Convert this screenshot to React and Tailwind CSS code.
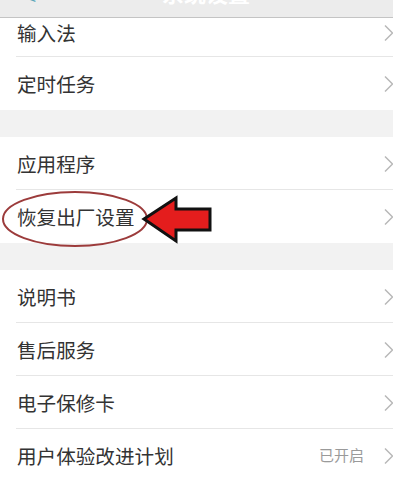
import React from 'react';

function Chevron() {
  return (
    <svg width="10" height="18" viewBox="0 0 10 18" className="shrink-0 -mr-[4px]">
      <path d="M1 1.5 L8.5 9 L1 16.5" fill="none" stroke="#b8b8b8" strokeWidth="1.5" />
    </svg>
  );
}

function Row({ label, value, first, last, h = 'h-[53px]' }) {
  return (
    <div className={`relative flex items-center pl-[17px] pr-[3px] ${h} bg-white`}>
      <span className={`flex-1 text-[19.6px] text-[#333] ${first ? 'pb-[9px]' : ''}`}>{label}</span>
      {value && <span className="mr-[20px] text-[15px] text-[#9a9a9a]">{value}</span>}
      <span className={first ? 'pb-[9px]' : ''}><Chevron /></span>
      {!last && <div className="absolute bottom-0 left-[16px] right-0 h-px bg-[#e6e6e6]" />}
    </div>
  );
}

export default function App() {
  return (
    <div className="relative w-[393px] h-[480px] overflow-hidden bg-[#f2f2f2]" style={{ fontFamily: '"Noto Sans CJK SC", "Noto Sans", sans-serif' }}>
      <div className="relative h-[18px] bg-[#ececec] border-b border-[#c4c4c4] overflow-hidden">
        <span className="absolute left-[26px] -top-[16px] text-[18px] text-[#5aa6b8]">&lt;</span>
        <span className="absolute left-[162px] -top-[24px] text-[22px] font-bold text-white">系统设置</span>
      </div>

      <Row label="输入法" first h="h-[39px]" />
      <Row label="定时任务" last h="h-[53px]" />
      <div className="h-[27px]" />
      <Row label="应用程序" />
      <Row label="恢复出厂设置" last />
      <div className="h-[27px]" />
      <Row label="说明书" />
      <Row label="售后服务" />
      <Row label="电子保修卡" />
      <Row label="用户体验改进计划" value="已开启" last />

      <svg className="absolute left-0 top-[186px]" width="220" height="66" viewBox="0 186 220 66">
        <ellipse cx="75" cy="219" rx="72" ry="27" fill="none" stroke="#9c3b3b" strokeWidth="2" />
        <path d="M144 219 L176 198 L176 209 L210 209 L210 230 L176 230 L176 241 Z" fill="#e41d1d" stroke="#111" strokeWidth="3" strokeLinejoin="miter" />
      </svg>
    </div>
  );
}
